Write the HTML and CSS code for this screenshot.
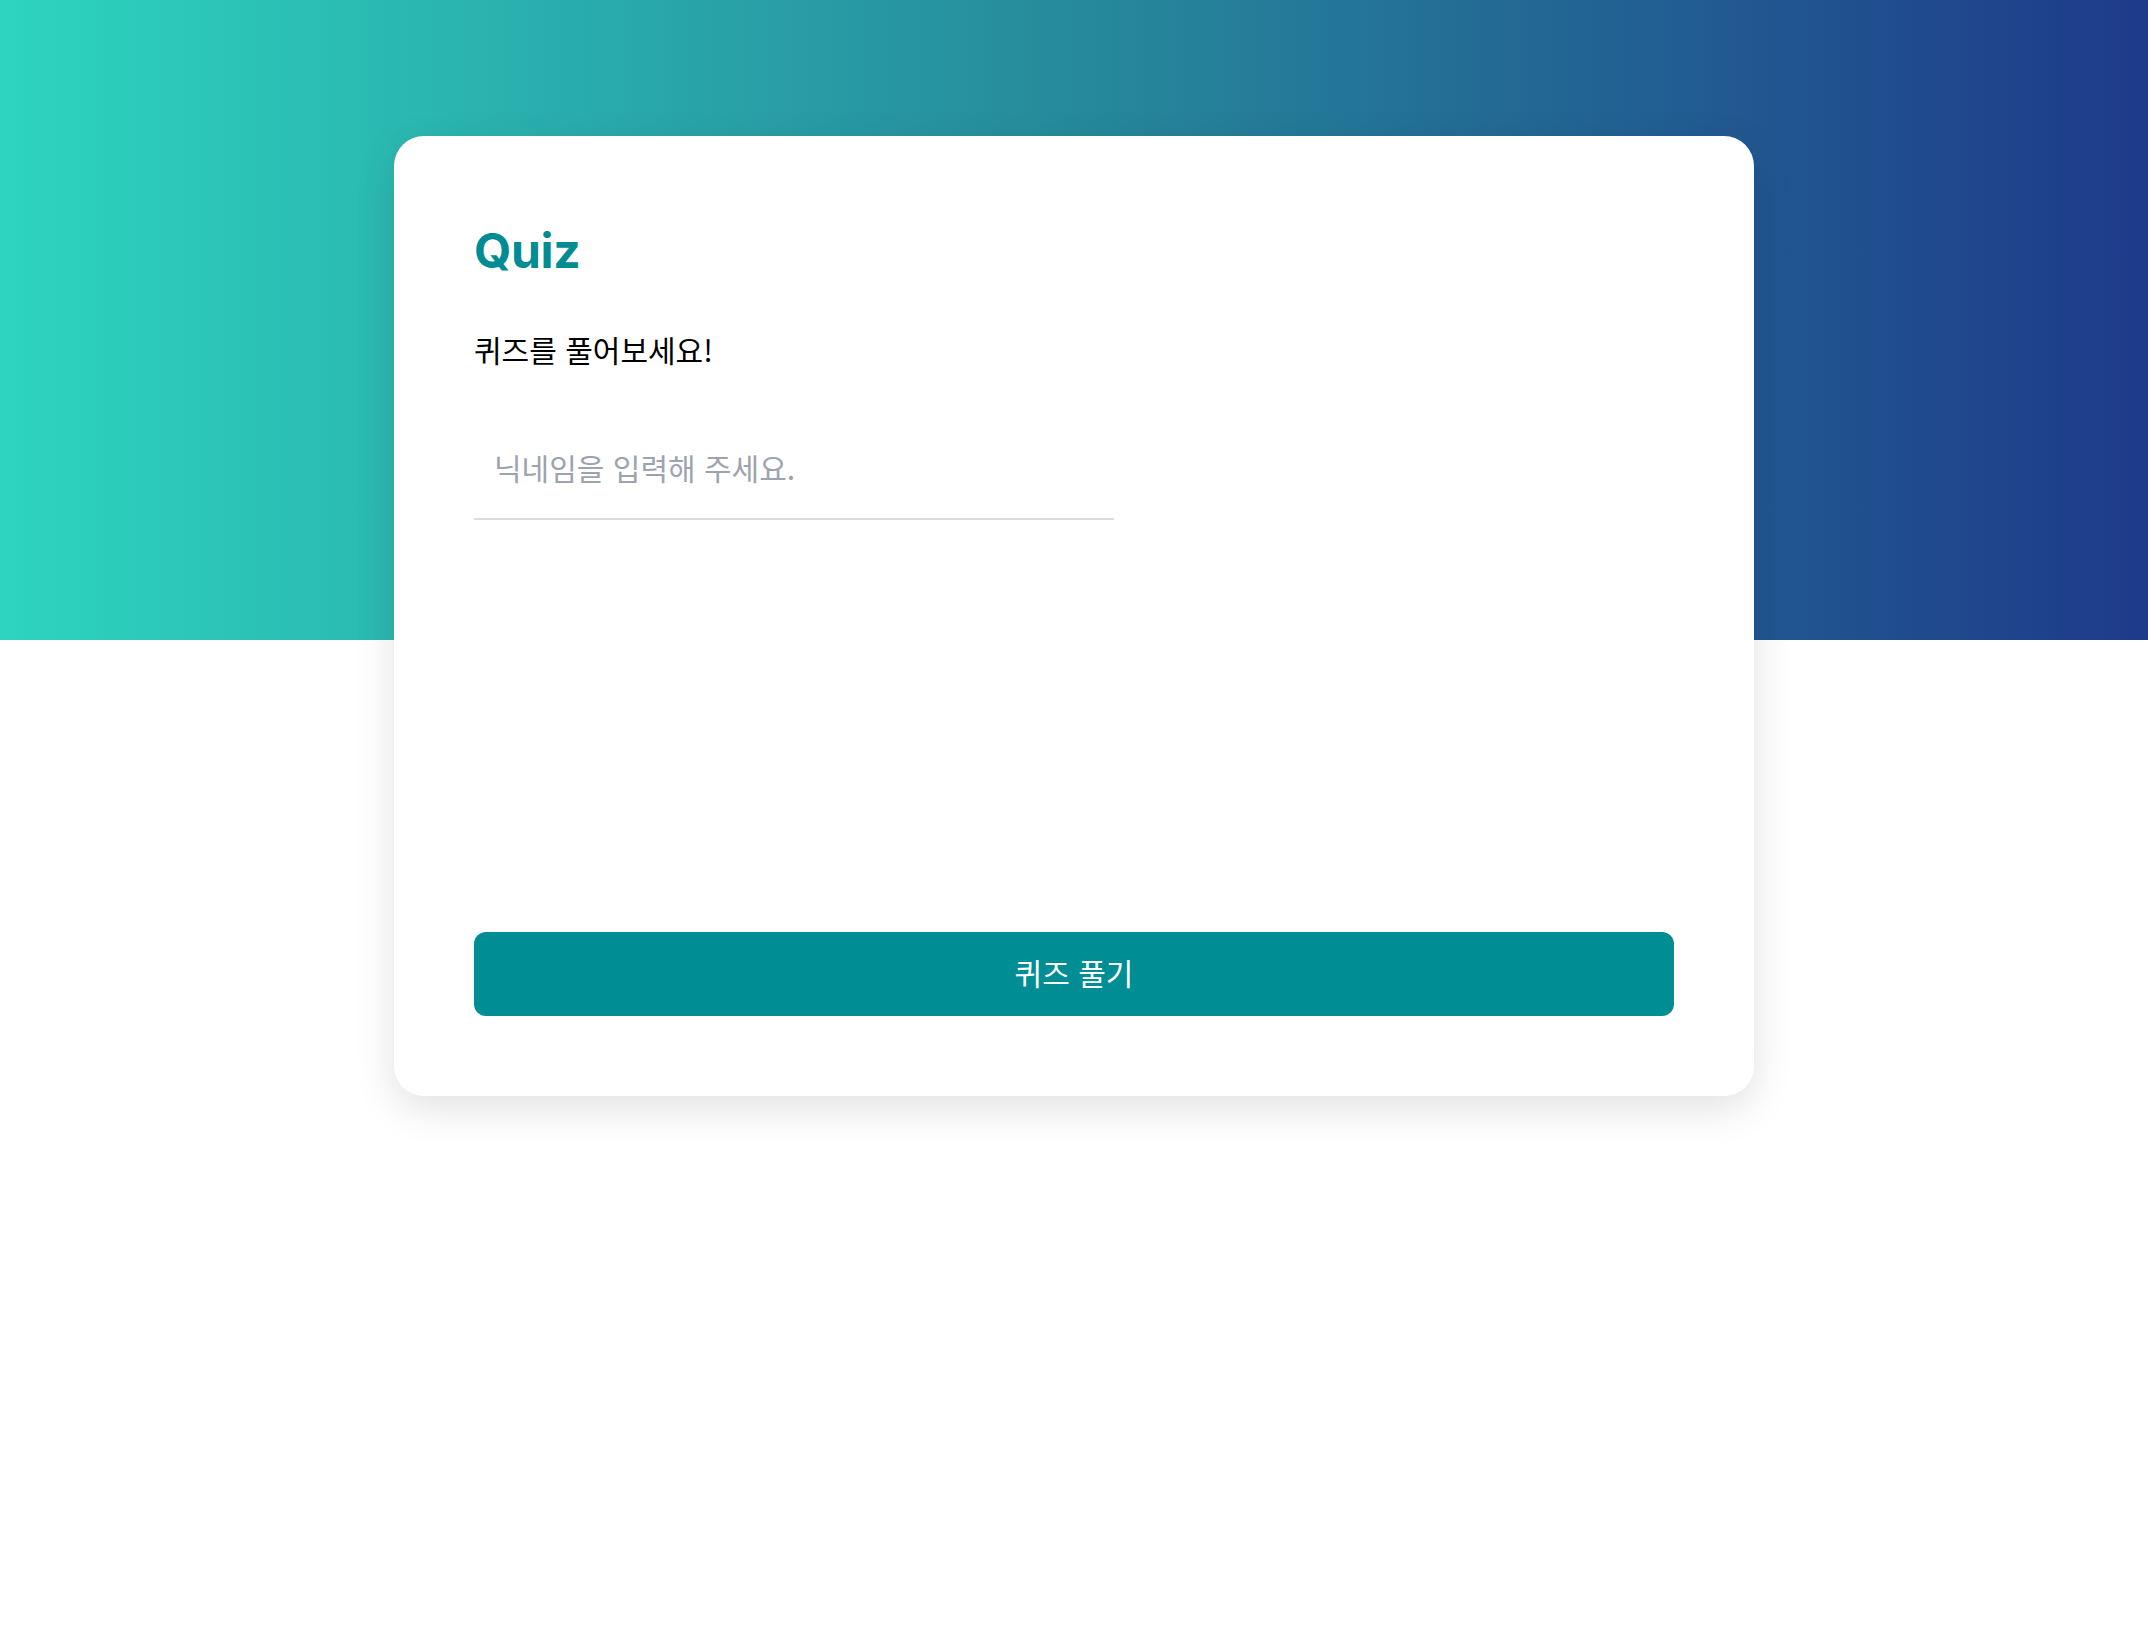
FILE: index.html
```html
<!DOCTYPE html>
<html lang="ko">
<head>
<meta charset="utf-8">
<title>Quiz</title>
<link rel="stylesheet" href="styles.css">
</head>
<body>
<main class="page">
  <section class="card">
    <h1 class="title">Quiz</h1>
    <p class="subtitle">퀴즈를 풀어보세요!</p>
    <input class="nickname" type="text" placeholder="닉네임을 입력해 주세요.">
    <button class="start" type="button">퀴즈 풀기</button>
  </section>
</main>
</body>
</html>
```
FILE: styles.css
```css
html, body {
  margin: 0;
  padding: 0;
}
body {
  background-color: #ffffff;
  background-image: linear-gradient(90deg, #2dd4bf 0%, #268a9c 50%, #1e3a8a 100%);
  background-size: 100% 640px;
  background-repeat: no-repeat;
  font-family: "Noto Sans CJK KR", "Noto Sans", sans-serif;
  min-height: 1636px;
}
.page {
  padding-top: 136px;
}
.card {
  box-sizing: border-box;
  width: 1360px;
  height: 960px;
  margin: 0 auto;
  padding: 80px;
  background: #ffffff;
  border-radius: 30px;
  box-shadow: 0 12px 40px rgba(0, 0, 0, 0.12);
  display: flex;
  flex-direction: column;
  align-items: flex-start;
}
.title {
  margin: 0;
  font-family: Inter, "Noto Sans", sans-serif;
  font-weight: 700;
  font-size: 48px;
  line-height: 70px;
  color: #018c93;
  letter-spacing: -0.3px;
}
.subtitle {
  margin: 42px 0 0;
  font-size: 30px;
  line-height: 42px;
  color: #000000;
}
.nickname {
  box-sizing: border-box;
  margin-top: 50px;
  width: 640px;
  height: 100px;
  padding: 0 20px 5px;
  border: none;
  border-bottom: 2px solid #dcdcdc;
  outline: none;
  background: transparent;
  font-family: "Noto Sans CJK KR", "Noto Sans", sans-serif;
  font-size: 30px;
  color: #111111;
}
.nickname::placeholder {
  color: #9ca3af;
}
.start {
  margin-top: auto;
  width: 100%;
  height: 84px;
  padding: 0 0 4px;
  border: none;
  border-radius: 12px;
  background: #018d94;
  color: #ffffff;
  font-family: "Noto Sans CJK KR", "Noto Sans", sans-serif;
  font-size: 30px;
  cursor: pointer;
}
```
